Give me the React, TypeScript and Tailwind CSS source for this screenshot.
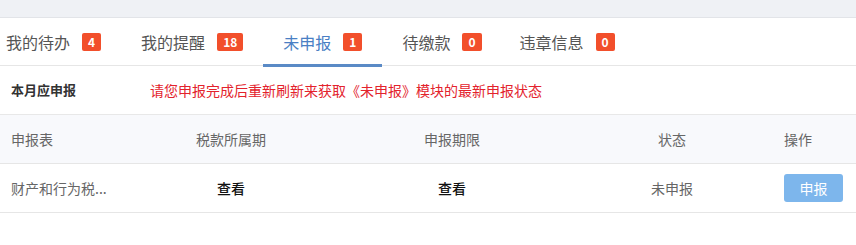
import React from "react";

const tabs = [
  { label: "我的待办", count: "4" },
  { label: "我的提醒", count: "18" },
  { label: "未申报", count: "1", active: true },
  { label: "待缴款", count: "0" },
  { label: "违章信息", count: "0" },
];

export default function App() {
  return (
    <div
      className="w-[856px] h-[245px] bg-white overflow-hidden"
      style={{ fontFamily: '"Microsoft YaHei", "Noto Sans CJK SC", "Noto Sans", sans-serif' }}
    >
      <div className="h-[18px] bg-[#eff1f5] border-b border-[#e2e4e8]" />
      <div className="flex h-[48px] border-b border-[#e6e6e6] pl-[6px]">
        {tabs.map((t, i) => (
          <div
            key={t.label}
            className={
              "relative flex items-center gap-[12px] " +
              (i === 0 ? "pr-[20px] " : i === 4 ? "pl-[18px] pr-[20px] " : "px-[20px] ") +
              (t.active ? "text-[#4a7fc4]" : "text-[#555555]")
            }
          >
            <span className="text-[16px] leading-none">{t.label}</span>
            <span className="h-[18px] min-w-[18px] px-[6px] rounded-[2px] bg-[#f24f2b] text-white text-[12px] leading-[18px] text-center font-bold">
              {t.count}
            </span>
            {t.active && (
              <div className="absolute left-0 right-0 bottom-[-2px] h-[3px] bg-[#5a8ac6]" />
            )}
          </div>
        ))}
      </div>
      <div className="flex items-center h-[49px] border-b border-[#e8e8e8] pl-[11px]">
        <span className="w-[139px] text-[13px] font-bold text-[#333333]">本月应申报</span>
        <span className="text-[14px] text-[#e3222c]">请您申报完成后重新刷新来获取《未申报》模块的最新申报状态</span>
      </div>
      <div className="grid grid-cols-[150px_162px_280px_160px_1fr] items-center h-[49px] bg-[#f8f9fc] border-b border-[#e6e6e6] text-[14px] text-[#666666]">
        <span className="pl-[11px]">申报表</span>
        <span className="text-center">税款所属期</span>
        <span className="text-center">申报期限</span>
        <span className="text-center">状态</span>
        <span className="pl-[32px]">操作</span>
      </div>
      <div className="grid grid-cols-[150px_162px_280px_160px_1fr] items-center h-[49px] border-b border-[#e6e6e6] text-[14px]">
        <span className="pl-[11px] text-[#666666]">财产和行为税...</span>
        <span className="text-center text-[#111111] font-medium">查看</span>
        <span className="text-center text-[#111111] font-medium">查看</span>
        <span className="text-center text-[#666666]">未申报</span>
        <span className="pl-[32px]">
          <button className="w-[59px] h-[28px] rounded-[3px] bg-[#7db6ec] text-white text-[14px]">申报</button>
        </span>
      </div>
    </div>
  );
}
